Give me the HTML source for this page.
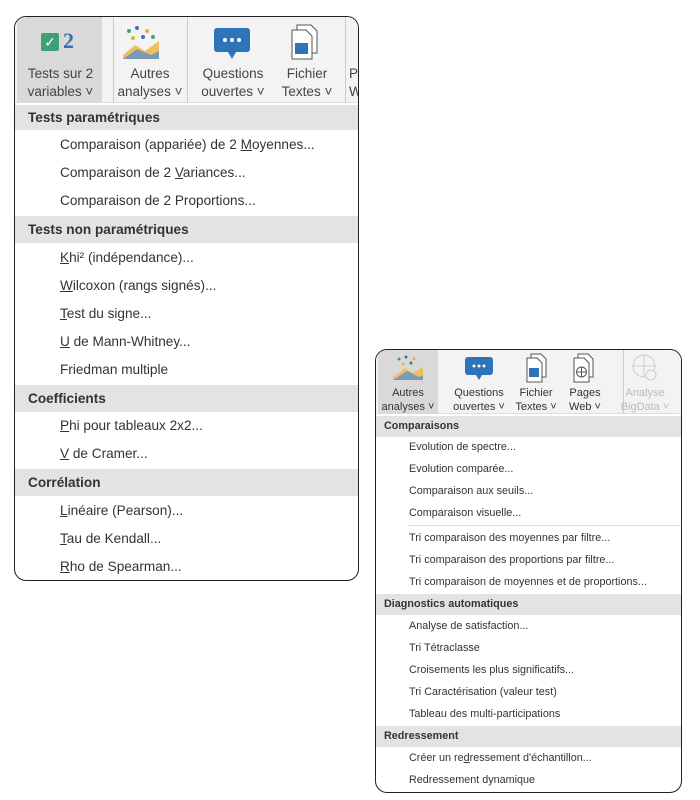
<!DOCTYPE html>
<html><head><meta charset="utf-8"><style>
*{margin:0;padding:0;box-sizing:border-box}
body{width:700px;height:800px;background:#fff;position:relative;overflow:hidden;font-family:"Liberation Sans",sans-serif;color:#333}
.p{position:absolute;border:1px solid #222;border-radius:12px;overflow:hidden;background:#fff}
.tb{position:absolute;left:0;top:0;right:0;background:#f3f3f3;border-bottom:1px solid #ddd}
.btn{position:absolute;top:0;text-align:center;color:#444}
.sel{background:#d9d9d9}
.t{position:absolute;white-space:nowrap}
.h{position:absolute;left:0;right:0;background:#e3e3e3;font-weight:bold;color:#333}
u{text-decoration:underline}
</style></head><body>

<div class="p" style="left:14px;top:16px;width:345px;height:565px">
 <div class="tb" style="height:86px">
  <div class="btn sel" style="left:2px;width:85px;height:86px"></div>
  <div style="position:absolute;left:98px;top:0;width:1px;height:86px;background:#ccc"></div>
  <div style="position:absolute;left:172px;top:0;width:1px;height:86px;background:#ccc"></div>
  <div style="position:absolute;left:26px;top:16px;width:18px;height:18px;background:#3fa077;border-radius:2px;color:#fff;font-size:14px;line-height:18px;text-align:center">✓</div>
  <div class="t" style="left:48px;top:11px;font-size:22px;font-weight:bold;color:#3c6fb0;font-family:'Liberation Serif',serif">2</div>
  <svg style="position:absolute;left:106px;top:8px" width="40" height="36"><circle cx="8" cy="6" r="2" fill="#3fa077"/><circle cx="16" cy="3" r="2" fill="#3c6fb0"/><circle cx="26" cy="6" r="2" fill="#e8b030"/><circle cx="12" cy="13" r="2" fill="#e8b030"/><circle cx="22" cy="12" r="2" fill="#3c6fb0"/><circle cx="32" cy="12" r="2" fill="#3fa077"/><path d="M2 30 L14 20 L24 26 L38 16 L38 34 L2 34Z" fill="#f0c060"/><path d="M2 34 L16 24 L30 30 L38 26 L38 34Z" fill="#7a9ab8"/></svg>
  <svg style="position:absolute;left:198px;top:10px" width="38" height="34"><rect x="1" y="1" width="36" height="24" rx="3" fill="#2f73b8"/><path d="M15 25 L19 32 L23 25Z" fill="#2f73b8"/><circle cx="12" cy="13" r="2" fill="#fff"/><circle cx="19" cy="13" r="2" fill="#fff"/><circle cx="26" cy="13" r="2" fill="#fff"/></svg>
  <svg style="position:absolute;left:274px;top:6px" width="32" height="38"><path d="M8 2 H22 L28 8 V30 H8Z" fill="#fff" stroke="#555"/><path d="M3 7 H17 L23 13 V36 H3Z" fill="#fff" stroke="#555"/><rect x="6" y="20" width="13" height="11" fill="#2f73b8"/></svg>
  <div style="position:absolute;left:330px;top:0;width:1px;height:86px;background:#ccc"></div>
  <div class="t" style="left:6px;top:48px;width:79px;text-align:center;font-size:13.5px;line-height:18px;color:#444">Tests sur 2<br>variables ˅</div>
  <div class="t" style="left:98px;top:48px;width:74px;text-align:center;font-size:13.5px;line-height:18px;color:#444">Autres<br>analyses ˅</div>
  <div class="t" style="left:178px;top:48px;width:80px;text-align:center;font-size:13.5px;line-height:18px;color:#444">Questions<br>ouvertes ˅</div>
  <div class="t" style="left:262px;top:48px;width:60px;text-align:center;font-size:13.5px;line-height:18px;color:#444">Fichier<br>Textes ˅</div>
  <div class="t" style="left:334px;top:48px;font-size:13.5px;line-height:18px;color:#444">P<br>W</div>
 </div>
 <div style="position:absolute;top:87px;left:0;right:0;font-size:13.6px">
  <div class="h" style="top:1px;height:25px;line-height:25px;padding-left:13px">Tests paramétriques</div>
  <div class="t" style="left:45px;top:33px">Comparaison (appariée) de 2 <u>M</u>oyennes...</div>
  <div class="t" style="left:45px;top:61px">Comparaison de 2 <u>V</u>ariances...</div>
  <div class="t" style="left:45px;top:89px">Comparaison de 2 Proportions...</div>
  <div class="h" style="top:112px;height:27px;line-height:27px;padding-left:13px">Tests non paramétriques</div>
  <div class="t" style="left:45px;top:146px"><u>K</u>hi² (indépendance)...</div>
  <div class="t" style="left:45px;top:174px"><u>W</u>ilcoxon (rangs signés)...</div>
  <div class="t" style="left:45px;top:202px"><u>T</u>est du signe...</div>
  <div class="t" style="left:45px;top:230px"><u>U</u> de Mann-Whitney...</div>
  <div class="t" style="left:45px;top:258px">Friedman multiple</div>
  <div class="h" style="top:281px;height:27px;line-height:27px;padding-left:13px">Coefficients</div>
  <div class="t" style="left:45px;top:314px"><u>P</u>hi pour tableaux 2x2...</div>
  <div class="t" style="left:45px;top:342px"><u>V</u> de Cramer...</div>
  <div class="h" style="top:365px;height:27px;line-height:27px;padding-left:13px">Corrélation</div>
  <div class="t" style="left:45px;top:399px"><u>L</u>inéaire (Pearson)...</div>
  <div class="t" style="left:45px;top:427px"><u>T</u>au de Kendall...</div>
  <div class="t" style="left:45px;top:455px"><u>R</u>ho de Spearman...</div>
 </div>
</div>

<div class="p" style="left:375px;top:349px;width:307px;height:444px">
 <div class="tb" style="height:64px">
  <div class="btn sel" style="left:2px;width:60px;height:64px"></div>
  <div style="position:absolute;left:247px;top:0;width:1px;height:64px;background:#ccc"></div>
  <svg style="position:absolute;left:15px;top:5px" width="34" height="26"><circle cx="8" cy="4" r="1.5" fill="#3fa077"/><circle cx="15" cy="2" r="1.5" fill="#3c6fb0"/><circle cx="23" cy="4" r="1.5" fill="#e8b030"/><circle cx="12" cy="9" r="1.5" fill="#e8b030"/><circle cx="20" cy="8" r="1.5" fill="#3c6fb0"/><path d="M2 22 L14 13 L22 18 L32 12 L32 25 L2 25Z" fill="#f0c060"/><path d="M2 25 L16 16 L28 22 L32 20 L32 25Z" fill="#7a9ab8"/></svg>
  <svg style="position:absolute;left:88px;top:6px" width="30" height="26"><rect x="1" y="1" width="28" height="18" rx="3" fill="#2f73b8"/><path d="M12 19 L15 24 L18 19Z" fill="#2f73b8"/><circle cx="10" cy="10" r="1.5" fill="#fff"/><circle cx="15" cy="10" r="1.5" fill="#fff"/><circle cx="20" cy="10" r="1.5" fill="#fff"/></svg>
  <svg style="position:absolute;left:149px;top:3px" width="24" height="30"><path d="M6 1 H16 L21 6 V24 H6Z" fill="#fff" stroke="#555"/><path d="M2 5 H12 L17 10 V29 H2Z" fill="#fff" stroke="#555"/><rect x="4" y="15" width="10" height="9" fill="#2f73b8"/></svg>
  <svg style="position:absolute;left:196px;top:3px" width="24" height="30"><path d="M6 1 H16 L21 6 V24 H6Z" fill="#fff" stroke="#555"/><path d="M2 5 H12 L17 10 V29 H2Z" fill="#fff" stroke="#555"/><circle cx="9.5" cy="19" r="5" fill="none" stroke="#555"/><path d="M4.5 19 H14.5 M9.5 14 V24" stroke="#555"/></svg>
  <svg style="position:absolute;left:254px;top:3px" width="30" height="30"><circle cx="14" cy="13" r="11" fill="none" stroke="#ccc"/><path d="M3 13 H25 M14 2 V24" stroke="#ccc"/><circle cx="21" cy="22" r="5" fill="#f3f3f3" stroke="#ccc"/></svg>
  <div class="t" style="left:2px;top:36px;width:60px;text-align:center;font-size:11px;line-height:14px">Autres<br>analyses ˅</div>
  <div class="t" style="left:70px;top:36px;width:66px;text-align:center;font-size:11px;line-height:14px">Questions<br>ouvertes ˅</div>
  <div class="t" style="left:136px;top:36px;width:48px;text-align:center;font-size:11px;line-height:14px">Fichier<br>Textes ˅</div>
  <div class="t" style="left:186px;top:36px;width:46px;text-align:center;font-size:11px;line-height:14px">Pages<br>Web ˅</div>
  <div class="t" style="left:240px;top:36px;width:58px;text-align:center;font-size:11px;line-height:14px;color:#bbb">Analyse<br>BigData ˅</div>
 </div>
 <div style="position:absolute;top:65px;left:0;right:0;font-size:10.8px">
  <div class="h" style="top:1px;height:21px;line-height:21px;padding-left:8px">Comparaisons</div>
  <div class="t" style="left:33px;top:26px">Evolution de spectre...</div>
  <div class="t" style="left:33px;top:48px">Evolution comparée...</div>
  <div class="t" style="left:33px;top:70px">Comparaison aux seuils...</div>
  <div class="t" style="left:33px;top:92px">Comparaison visuelle...</div>
  <div style="position:absolute;left:32px;right:0;top:110px;height:1px;background:#ddd"></div>
  <div class="t" style="left:33px;top:117px">Tri comparaison des moyennes par filtre...</div>
  <div class="t" style="left:33px;top:139px">Tri comparaison des proportions par filtre...</div>
  <div class="t" style="left:33px;top:161px">Tri comparaison de moyennes et de proportions...</div>
  <div class="h" style="top:179px;height:21px;line-height:21px;padding-left:8px">Diagnostics automatiques</div>
  <div class="t" style="left:33px;top:205px">Analyse de satisfaction...</div>
  <div class="t" style="left:33px;top:227px">Tri Tétraclasse</div>
  <div class="t" style="left:33px;top:249px">Croisements les plus significatifs...</div>
  <div class="t" style="left:33px;top:271px">Tri Caractérisation (valeur test)</div>
  <div class="t" style="left:33px;top:293px">Tableau des multi-participations</div>
  <div class="h" style="top:311px;height:21px;line-height:21px;padding-left:8px">Redressement</div>
  <div class="t" style="left:33px;top:337px">Créer un re<u>d</u>ressement d'échantillon...</div>
  <div class="t" style="left:33px;top:359px">Redressement dynamique</div>
 </div>
</div>
</body></html>
